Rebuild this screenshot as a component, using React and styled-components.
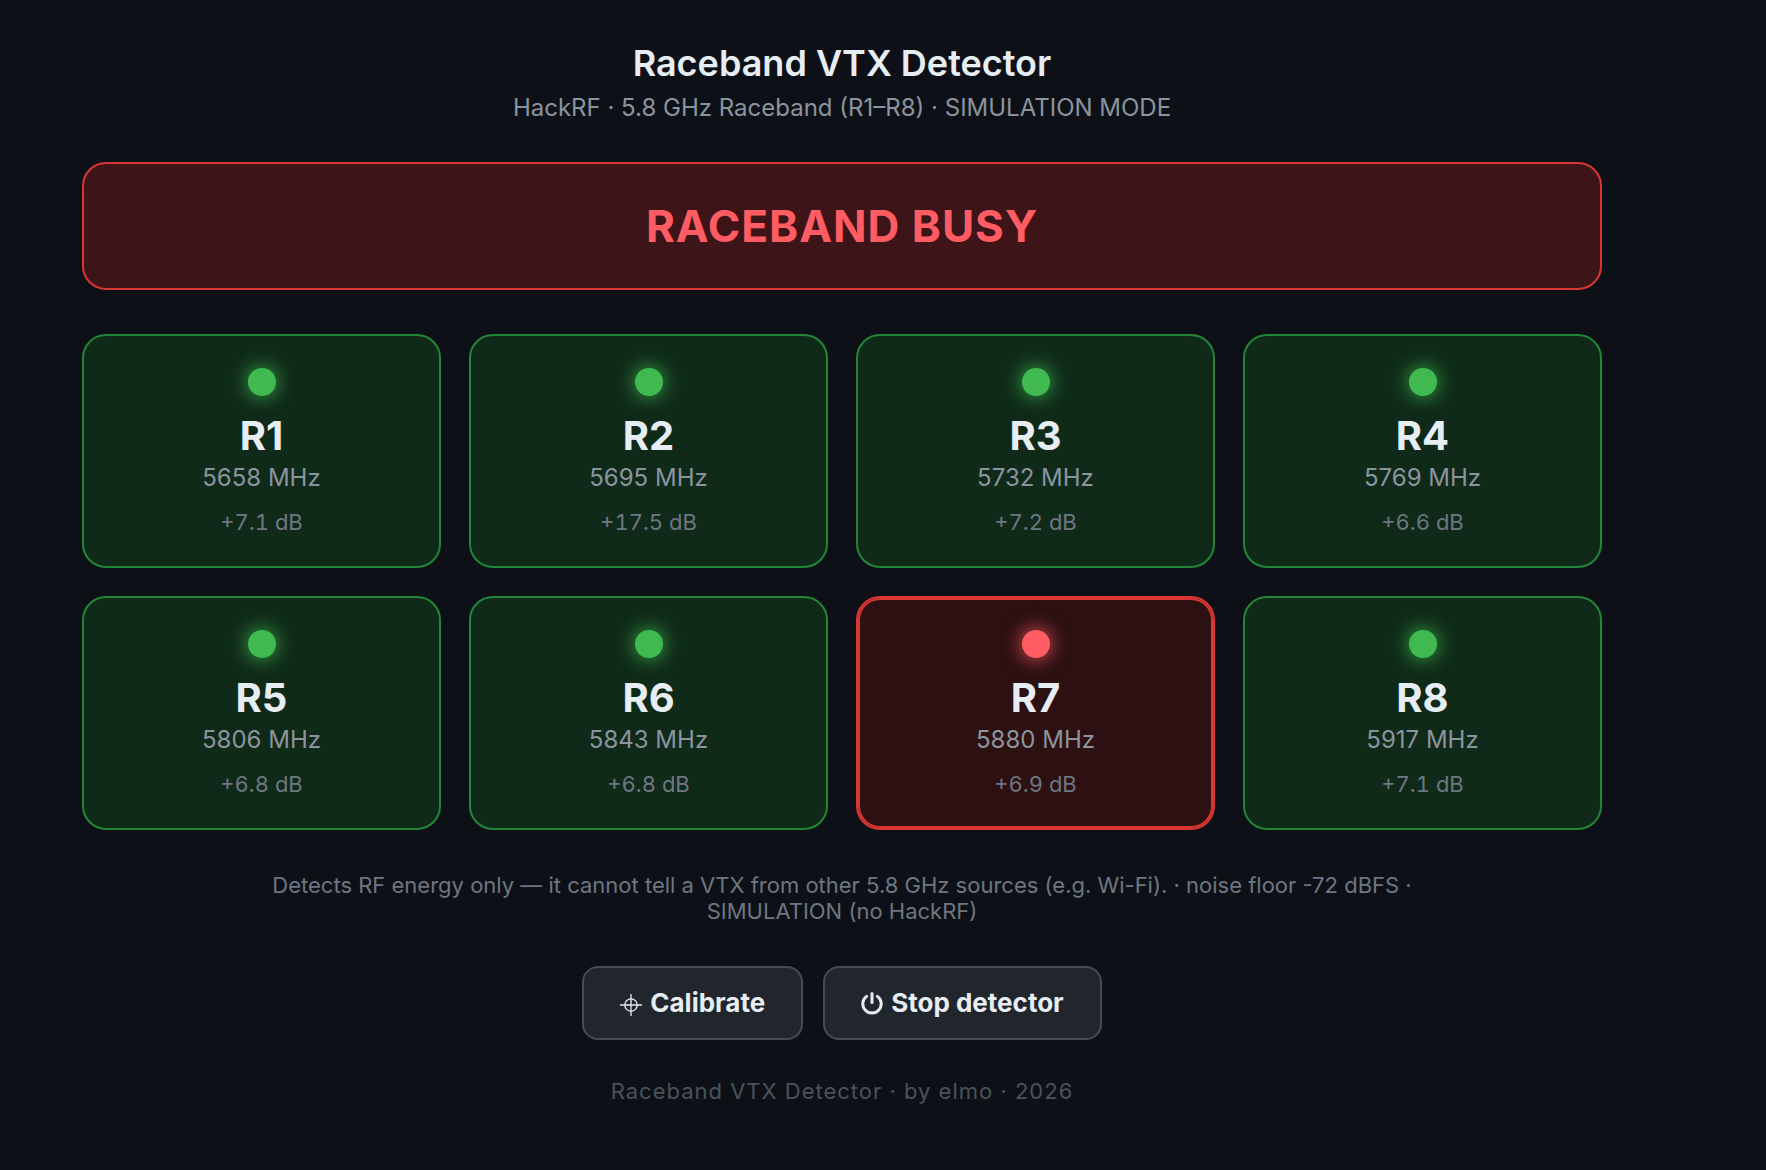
import React from "react";
import styled, { createGlobalStyle } from "styled-components";

const GlobalStyle = createGlobalStyle`
  * { box-sizing: border-box; }
  body {
    margin: 0;
    background: #0d1117;
    color: #e6edf3;
    font-family: Inter, "Liberation Sans", sans-serif;
    -webkit-font-smoothing: antialiased;
  }
  h1, h2, p { margin: 0; }
`;

const Page = styled.main`
  padding: 40px 164px 40px 82px;
  text-align: center;
`;

const Title = styled.h1`
  font-size: 36px;
  line-height: 46px;
  font-weight: 600;
`;

const Subtitle = styled.p`
  && { margin-top: 8px; }
  font-size: 24px;
  line-height: 28px;
  color: #8b949e;
`;

const Banner = styled.p.attrs({ role: "status" })`
  && { margin-top: 40px; }
  padding: 36px;
  border: 2px solid #da3633;
  border-radius: 24px;
  background: #3d1418;
  color: #ff5c63;
  font-size: 44px;
  line-height: 52px;
  font-weight: 700;
  letter-spacing: 1px;
`;

const Grid = styled.section`
  display: grid;
  grid-template-columns: repeat(4, 1fr);
  gap: 28px;
  margin-top: 44px;
`;

const Card = styled.article`
  display: flex;
  flex-direction: column;
  align-items: center;
  padding: 32px 32px 30px;
  border: 2px solid ${(p) => (p.$busy ? "#da3633" : "#238636")};
  border-radius: 24px;
  background: ${(p) => (p.$busy ? "#2d1012" : "#0f2a19")};
  box-shadow: ${(p) => (p.$busy ? "inset 0 0 0 2px #da3633" : "none")};
`;

const Dot = styled.span`
  width: 28px;
  height: 28px;
  border-radius: 50%;
  background: ${(p) => (p.$busy ? "#ff5c63" : "#3fb950")};
  box-shadow: 0 0 20px ${(p) => (p.$busy ? "#ff5c63" : "#3fb950")};
`;

const Channel = styled.h2`
  && { margin-top: 16px; }
  font-size: 40px;
  line-height: 48px;
  font-weight: 700;
`;

const Frequency = styled.p`
  && { margin-top: 4px; }
  font-size: 24px;
  line-height: 28px;
  color: #8b949e;
`;

const Level = styled.p`
  && { margin-top: 16px; }
  font-size: 22px;
  line-height: 28px;
  font-variant-numeric: tabular-nums;
  color: #6e7681;
`;

const Note = styled.p`
  && { margin: 42px auto 0; }
  max-width: 1200px;
  font-size: 22px;
  line-height: 26px;
  color: #6e7681;
`;

const Actions = styled.div`
  display: flex;
  justify-content: center;
  gap: 20px;
  margin-top: 42px;
`;

const Button = styled.button`
  display: flex;
  align-items: center;
  gap: 8px;
  padding: 20px 36px;
  border: 2px solid #444c56;
  border-radius: 16px;
  background: #21262d;
  color: #e6edf3;
  font: 700 26px/30px Inter, "Liberation Sans", sans-serif;
  cursor: pointer;
`;

const Footer = styled.footer`
  margin-top: 38px;
  font-size: 22px;
  line-height: 26px;
  letter-spacing: 1px;
  color: #4b525b;
`;

const channels = [
  { name: "R1", mhz: 5658, level: "+7.1" },
  { name: "R2", mhz: 5695, level: "+17.5" },
  { name: "R3", mhz: 5732, level: "+7.2" },
  { name: "R4", mhz: 5769, level: "+6.6" },
  { name: "R5", mhz: 5806, level: "+6.8" },
  { name: "R6", mhz: 5843, level: "+6.8" },
  { name: "R7", mhz: 5880, level: "+6.9", busy: true },
  { name: "R8", mhz: 5917, level: "+7.1" },
];

const CrosshairIcon = () => (
  <svg width="22" height="26" viewBox="0 0 22 26" fill="none" stroke="currentColor" strokeWidth="1.3" aria-hidden="true">
    <circle cx="11" cy="15" r="6.2" />
    <path d="M0 15H22M11 4V26" />
  </svg>
);

const PowerIcon = () => (
  <svg width="22" height="26" viewBox="0 0 22 26" fill="none" stroke="currentColor" strokeWidth="3" strokeLinecap="round" aria-hidden="true">
    <path d="M11 3.5V12.5" />
    <path d="M5.6 6.4A9.2 9.2 0 1 0 16.4 6.4" />
  </svg>
);

export default function App() {
  return (
    <>
      <GlobalStyle />
      <Page>
        <header>
          <Title>Raceband VTX Detector</Title>
          <Subtitle>HackRF · 5.8 GHz Raceband (R1–R8) · SIMULATION MODE</Subtitle>
        </header>
        <Banner>RACEBAND BUSY</Banner>
        <Grid>
          {channels.map((c) => (
            <Card key={c.name} $busy={c.busy}>
              <Dot $busy={c.busy} />
              <Channel>{c.name}</Channel>
              <Frequency>{c.mhz} MHz</Frequency>
              <Level>{c.level} dB</Level>
            </Card>
          ))}
        </Grid>
        <Note>
          Detects RF energy only — it cannot tell a VTX from other 5.8 GHz sources (e.g. Wi-Fi). · noise
          floor -72 dBFS · SIMULATION (no HackRF)
        </Note>
        <Actions>
          <Button type="button">
            <CrosshairIcon />
            Calibrate
          </Button>
          <Button type="button">
            <PowerIcon />
            Stop detector
          </Button>
        </Actions>
        <Footer>Raceband VTX Detector · by elmo · 2026</Footer>
      </Page>
    </>
  );
}
